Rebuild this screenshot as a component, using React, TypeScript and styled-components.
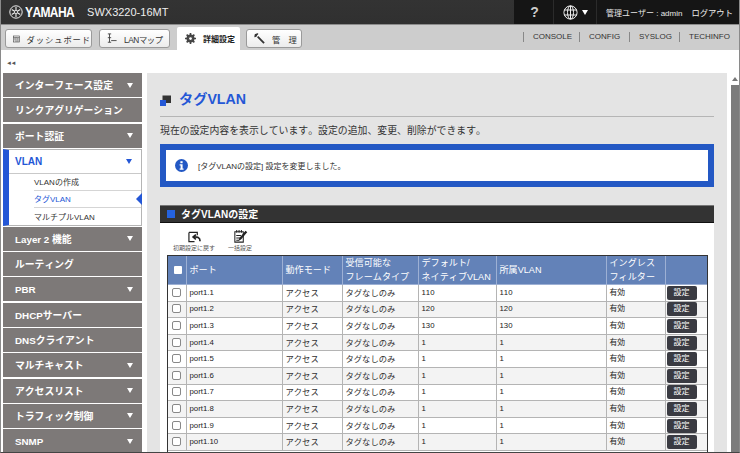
import React from "react";
import styled, { createGlobalStyle } from "styled-components";

const FONT = `"Liberation Sans", "Noto Sans CJK JP", Arial, sans-serif`;

const Global = createGlobalStyle`
  html, body { margin: 0; padding: 0; height: 100%; overflow: hidden; background: #fff; }
  #root { height: 453px; }
  * { box-sizing: border-box; font-kerning: none; }
`;

const Page = styled.div`
  width: 740px;
  height: 453px;
  overflow: hidden;
  font-family: ${FONT};
  background: #fff;
  display: flex;
  flex-direction: column;
  border-left: 1px solid #8a8a8a;
  border-right: 1px solid #8a8a8a;
  border-bottom: 1px solid #444;
`;

const TopBar = styled.header`
  height: 25px;
  flex: none;
  display: flex;
  align-items: stretch;
  background: linear-gradient(#333, #303030);
  border-bottom: 1px solid #8c8c8c;
  color: #fff;
`;

const Brand = styled.div`
  flex: 1;
  display: flex;
  align-items: center;
  padding-left: 8px;
`;

const BrandName = styled.span`
  font-size: 12px;
  font-weight: 700;
  letter-spacing: -0.6px;
  margin-left: 2px;
  transform: scaleY(1.28);
`;

const Model = styled.span`
  font-size: 11px;
  margin-left: 13px;
  color: #eee;
`;

const TopTools = styled.div`
  width: 225px;
  display: flex;
  align-items: center;
  background: #151515;
`;

const TopCell = styled.div<{ $w: number }>`
  width: ${(p) => p.$w}px;
  height: 100%;
  display: flex;
  align-items: center;
  justify-content: center;
  gap: 4px;
  border-right: 1px solid #2b2b2b;
`;

const Help = styled.span`
  font-size: 14px;
  font-weight: 700;
  color: #ccc;
  margin-left: 2px;
`;

const UserText = styled.span`
  font-size: 8px;
  color: #e6e6e6;
  margin-left: 9px;
  white-space: nowrap;
`;

const Logout = styled.span`
  font-size: 8.3px;
  color: #eee;
  margin-left: 9px;
  white-space: nowrap;
`;

const Arrow = styled.span<{ $color?: string }>`
  width: 0;
  height: 0;
  border-left: 3.5px solid transparent;
  border-right: 3.5px solid transparent;
  border-top: 5px solid ${(p) => p.$color || "#fff"};
  display: block;
`;

const TabBar = styled.nav`
  height: 25px;
  flex: none;
  display: flex;
  align-items: flex-end;
  background: #cdcdcd;
  padding-left: 4px;
`;

const Tabs = styled.div`
  flex: 1;
  display: flex;
  align-items: flex-end;
  height: 100%;
`;

const TabButton = styled.div<{ $w: number; $gap: number }>`
  width: ${(p) => p.$w}px;
  margin-right: ${(p) => p.$gap}px;
  height: 19px;
  margin-bottom: 2px;
  display: flex;
  align-items: center;
  gap: 7px;
  padding-left: 7px;
  background: linear-gradient(#fff, #ececec);
  border: 1px solid #9a9a9a;
  border-radius: 3px;
  font-size: 8.3px;
  color: #333;
  white-space: nowrap;
`;

const TabLabel = styled.span<{ $spread: number }>`
  letter-spacing: ${(p) => p.$spread}px;
`;

const ActiveTab = styled.div`
  width: 63px;
  margin-right: 6px;
  height: 23px;
  display: flex;
  align-items: center;
  gap: 7px;
  padding-left: 8px;
  background: #fff;
  border-radius: 2px 2px 0 0;
  font-size: 8px;
  font-weight: 700;
  color: #222;
  white-space: nowrap;
`;

const LinkBar = styled.div`
  display: flex;
  align-items: center;
  height: 100%;
  padding-bottom: 2px;
`;

const BarLink = styled.span<{ $w: number }>`
  width: ${(p) => p.$w}px;
  height: 10px;
  line-height: 10px;
  border-left: 1px solid #888;
  padding-left: 9px;
  font-size: 8px;
  color: #333;
`;

const Body = styled.div`
  flex: 1;
  min-height: 0;
  display: flex;
`;

const SideCol = styled.aside`
  width: 146px;
  flex: none;
  padding: 3px 0 0 2px;
  overflow: hidden;
`;

const Collapse = styled.div`
  height: 20px;
  padding-left: 3px;
  display: flex;
  align-items: center;
  font-size: 6px;
  letter-spacing: -1.5px;
  color: #555;
`;

const SideItem = styled.div`
  width: 139px;
  height: 24px;
  margin-bottom: 1.3px;
  background: #7d7978;
  color: #fff;
  font-size: 9.8px;
  font-weight: 700;
  display: flex;
  align-items: center;
  justify-content: space-between;
  padding: 0 9px 0 12px;
  white-space: nowrap;
`;

const OpenGroup = styled.div`
  width: 139px;
  margin-bottom: 1px;
  border-left: 6px solid #2457d6;
  border-right: 1px solid #b5b5b5;
  border-bottom: 1px solid #b5b5b5;
  border-top: 1px solid #b5b5b5;
  background: #fff;
`;

const OpenHead = styled.div`
  height: 24px;
  display: flex;
  align-items: center;
  justify-content: space-between;
  padding: 0 9px 0 6px;
  font-size: 10px;
  font-weight: 700;
  color: #2457d6;
  border-bottom: 1px solid #c9c9c9;
`;

const SubItem = styled.div<{ $active?: boolean; $last?: boolean }>`
  height: 17px;
  margin-left: 25px;
  position: relative;
  display: flex;
  align-items: center;
  font-size: 8px;
  color: ${(p) => (p.$active ? "#2457d6" : "#333")};
  border-bottom: ${(p) => (p.$last ? "none" : "1px solid #d5d5d5")};
  white-space: nowrap;
`;

const SubPointer = styled.span`
  position: absolute;
  right: -1px;
  top: 2px;
  width: 0;
  height: 0;
  border-top: 6px solid transparent;
  border-bottom: 6px solid transparent;
  border-right: 6px solid #2457d6;
`;

const Main = styled.main`
  flex: 1;
  min-width: 0;
  background: #e4e4e4;
  margin-top: 23px;
  padding: 0 13px;
  overflow: hidden;
`;

const ScrollTrack = styled.div`
  width: 8px;
  flex: none;
  margin: 23px 0 0 4px;
  display: flex;
  flex-direction: column;
`;

const ScrollUp = styled.div`
  height: 12px;
  display: flex;
  align-items: center;
  justify-content: center;
  background: #fff;
`;

const ScrollArrow = styled.span`
  width: 0;
  height: 0;
  border-left: 3px solid transparent;
  border-right: 3px solid transparent;
  border-bottom: 4px solid #777;
`;

const ScrollThumb = styled.div`
  flex: 1;
  background: #7c7c7c;
`;

const TitleRow = styled.div`
  height: 44px;
  display: flex;
  align-items: flex-end;
  gap: 8px;
  padding-bottom: 7px;
  border-bottom: 1px solid #b5b5b5;
`;

const PageTitle = styled.h1`
  margin: 0;
  font-size: 14.2px;
  line-height: 20px;
  font-weight: 700;
  color: #2457d6;
`;

const Lead = styled.p`
  margin: 0;
  height: 27px;
  line-height: 27px;
  font-size: 9.9px;
  color: #333;
  white-space: nowrap;
`;

const Notice = styled.div`
  height: 43px;
  display: flex;
  align-items: center;
  gap: 10px;
  padding: 0 0 1px 9px;
  background: #fff;
  border: 6px solid #2358c4;
  font-size: 8px;
  color: #333;
`;

const Panel = styled.section`
  margin-top: 18px;
  background: #fff;
`;

const PanelHead = styled.h2`
  margin: 0;
  height: 18px;
  display: flex;
  align-items: center;
  gap: 6px;
  padding: 0 0 1px 7px;
  background: #333;
  border-top: 1px solid #777;
  border-bottom: 1px solid #111;
  font-size: 10px;
  font-weight: 700;
  color: #fff;
`;

const HeadSquare = styled.span`
  width: 8px;
  height: 8px;
  background: #2563e0;
`;

const ActionRow = styled.div`
  height: 32px;
  display: flex;
  padding: 5px 0 0 13px;
  gap: 13px;
`;

const ActionItem = styled.div`
  display: flex;
  flex-direction: column;
  align-items: center;
  justify-content: flex-end;
  height: 25px;
  font-size: 6px;
  line-height: 9px;
  color: #555;
  white-space: nowrap;
`;

const TableFrame = styled.div`
  width: 541px;
  height: 198px;
  margin-left: 7px;
  border: 1px solid #333;
  border-bottom: none;
`;

const Table = styled.table`
  width: 539px;
  border-collapse: collapse;
  table-layout: fixed;
`;

const Th = styled.th`
  height: 28px;
  padding: 0 0 0 3px;
  background: #6382b8;
  border: 1px solid #9db0d4;
  border-top: none;
  color: #fff;
  font-size: 9.1px;
  line-height: 14px;
  font-weight: 400;
  text-align: left;
  white-space: nowrap;
  &:first-child { border-left: none; }
  &:last-child { border-right: none; }
`;

const Tr = styled.tr<{ $even: boolean }>`
  background: ${(p) => (p.$even ? "#f3f3f3" : "#fff")};
`;

const Td = styled.td<{ $small?: boolean }>`
  height: 16.6px;
  padding: 0 0 0 3px;
  border: 1px solid #b4b4b4;
  color: ${(p) => (p.$small ? "#222" : "#333")};
  font-size: ${(p) => (p.$small ? 7.8 : 8.3)}px;
  line-height: 14px;
  white-space: nowrap;
  overflow: hidden;
  &:first-child { border-left: none; }
  &:last-child { border-right: none; }
`;

const CheckTd = styled(Td)`
  padding: 0;
  text-align: center;
`;

const CheckBox = styled.span`
  display: block;
  width: 9px;
  height: 9px;
  margin: 0 auto 1px;
  border: 1px solid #888;
  border-radius: 2px;
  background: #fff;
`;

const HeadCheck = styled.span`
  display: block;
  width: 8px;
  height: 8px;
  margin: 0 auto;
  background: #fff;
  border-radius: 1px;
`;

const SetButton = styled.span`
  display: block;
  width: 30px;
  height: 14px;
  margin: 0 0 0 1px;
  line-height: 14px;
  background: #3a3b42;
  border-radius: 2px;
  color: #fff;
  font-size: 8px;
  text-align: center;
`;

const Logo = () => (
  <svg width="14" height="14" viewBox="0 0 14 14" fill="none" stroke="#eee">
    <circle cx="7" cy="7" r="6.2" strokeWidth="1" />
    <g strokeWidth="1.1">
      <path d="M7 2v10M2.7 4.5l8.6 5M2.7 9.5l8.6-5" />
    </g>
    <circle cx="7" cy="7" r="1.6" fill="#333" strokeWidth="0.8" />
  </svg>
);

const Globe = () => (
  <svg width="15" height="15" viewBox="0 0 15 15" fill="none" stroke="#eee" strokeWidth="1">
    <circle cx="7.5" cy="7.5" r="6.6" />
    <ellipse cx="7.5" cy="7.5" rx="3" ry="6.6" />
    <path d="M7.5 1v13M1 5h13M1 10h13" />
  </svg>
);

const DashIcon = () => (
  <svg width="10" height="10" viewBox="0 0 11 11" fill="none" stroke="#444">
    <rect x="0.5" y="0.5" width="10" height="10" />
    <path d="M0.5 3h10M5 3v7.5M2 5h2M2 7h2M6.5 5h3M6.5 7h3M6.5 9h3" />
  </svg>
);

const LanIcon = () => (
  <svg width="10" height="11" viewBox="0 0 12 12" fill="none" stroke="#444">
    <path d="M1 0.5h4M3 0.5v10M1 5h4M1 10.5h4M5 8.5h6.5" strokeWidth="1.1" />
  </svg>
);

const Gear = () => (
  <svg width="11" height="11" viewBox="0 0 12 12">
    <circle cx="6" cy="6" r="3.4" fill="none" stroke="#444" strokeWidth="2" />
    <path d="M6 0v12M0 6h12M1.8 1.8l8.4 8.4M10.2 1.8l-8.4 8.4" stroke="#444" strokeWidth="1.8" />
    <circle cx="6" cy="6" r="1.5" fill="#fff" />
  </svg>
);

const Wrench = () => (
  <svg width="11" height="11" viewBox="0 0 12 12" fill="none" stroke="#333">
    <path d="M11 11L4 4" strokeWidth="2" />
    <path d="M1 1.5l2 2M4.5 1.2A3 3 0 0 0 1.2 4.5" strokeWidth="1.6" />
  </svg>
);

const TitleIcon = () => (
  <svg width="11" height="11" viewBox="0 0 11 11" style={{ marginBottom: 3 }}>
    <rect x="2.5" y="0.5" width="8.5" height="7.5" fill="#333" />
    <rect x="0" y="5" width="6" height="6" fill="#2457d6" />
  </svg>
);

const InfoIcon = () => (
  <svg width="13" height="13" viewBox="0 0 13 13">
    <circle cx="6.5" cy="6.5" r="6.5" fill="#2358c4" />
    <rect x="5.4" y="2.2" width="2.2" height="2" fill="#fff" />
    <path d="M4.6 5.3h3v4.2h1v1.3H4.6V9.5h1V6.6h-1z" fill="#fff" />
  </svg>
);

const ResetIcon = () => (
  <svg width="15" height="13" viewBox="0 0 16 14" fill="none" stroke="#222" strokeWidth="1.3">
    <path d="M2 1.5h9v3M2 1.5v10h6" />
    <path d="M14 11c0-4-3-5-7-4.5M9.5 3.8L6.5 6.5l3 2.6" strokeWidth="1.8" />
  </svg>
);

const BatchIcon = () => (
  <svg width="16" height="15" viewBox="0 0 16 16" fill="none" stroke="#222" strokeWidth="1.1">
    <path d="M2.5 3h9v11h-9zM4.5 1v3M7 1v3M9.5 1v3M4 7h5M4 9.5h4M4 12h3" />
    <path d="M15 3.5L9 10.5l-1.6 1 .6-1.8 6-7z" fill="#222" />
  </svg>
);

const NAV_TOP = [
  { label: "インターフェース設定", arrow: true },
  { label: "リンクアグリゲーション", arrow: false },
  { label: "ポート認証", arrow: true },
];
const NAV_BOTTOM = [
  { label: "Layer 2 機能", arrow: true },
  { label: "ルーティング", arrow: false },
  { label: "PBR", arrow: true },
  { label: "DHCPサーバー", arrow: false },
  { label: "DNSクライアント", arrow: false },
  { label: "マルチキャスト", arrow: true },
  { label: "アクセスリスト", arrow: true },
  { label: "トラフィック制御", arrow: true },
  { label: "SNMP", arrow: true },
];

const ROWS = Array.from({ length: 10 }, (_, i) => ({
  port: `port1.${i + 1}`,
  vlan: i < 3 ? String(110 + i * 10) : "1",
}));

const COLS = [18, 96, 60, 76, 78, 110, 59, 42];

export default function App() {
  return (
    <Page>
      <Global />
      <TopBar>
        <Brand>
          <Logo />
          <BrandName>YAMAHA</BrandName>
          <Model>SWX3220-16MT</Model>
        </Brand>
        <TopTools>
          <TopCell $w={40}>
            <Help>?</Help>
          </TopCell>
          <TopCell $w={43}>
            <Globe />
            <Arrow />
          </TopCell>
          <UserText>管理ユーザー : admin</UserText>
          <Logout>ログアウト</Logout>
        </TopTools>
      </TopBar>
      <TabBar>
        <Tabs>
          <TabButton $w={87} $gap={7}>
            <DashIcon />
            <TabLabel $spread={0.9}>ダッシュボード</TabLabel>
          </TabButton>
          <TabButton $w={71} $gap={7}>
            <LanIcon />
            <TabLabel $spread={-0.4}>LANマップ</TabLabel>
          </TabButton>
          <ActiveTab>
            <Gear />
            詳細設定
          </ActiveTab>
          <TabButton $w={56} $gap={0}>
            <Wrench />
            管　理
          </TabButton>
        </Tabs>
        <LinkBar>
          <BarLink $w={56}>CONSOLE</BarLink>
          <BarLink $w={50}>CONFIG</BarLink>
          <BarLink $w={50}>SYSLOG</BarLink>
          <BarLink $w={60}>TECHINFO</BarLink>
        </LinkBar>
      </TabBar>
      <Body>
        <SideCol>
          <Collapse>◄◄</Collapse>
          {NAV_TOP.map((n) => (
            <SideItem key={n.label}>
              {n.label}
              {n.arrow && <Arrow />}
            </SideItem>
          ))}
          <OpenGroup>
            <OpenHead>
              VLAN
              <Arrow $color="#2457d6" />
            </OpenHead>
            <SubItem>VLANの作成</SubItem>
            <SubItem $active>
              タグVLAN
              <SubPointer />
            </SubItem>
            <SubItem $last>マルチプルVLAN</SubItem>
          </OpenGroup>
          {NAV_BOTTOM.map((n) => (
            <SideItem key={n.label}>
              {n.label}
              {n.arrow && <Arrow />}
            </SideItem>
          ))}
        </SideCol>
        <Main>
          <TitleRow>
            <TitleIcon />
            <PageTitle>タグVLAN</PageTitle>
          </TitleRow>
          <Lead>現在の設定内容を表示しています。設定の追加、変更、削除ができます。</Lead>
          <Notice>
            <InfoIcon />
            [タグVLANの設定] 設定を変更しました。
          </Notice>
          <Panel>
            <PanelHead>
              <HeadSquare />
              タグVLANの設定
            </PanelHead>
            <ActionRow>
              <ActionItem>
                <ResetIcon />
                初期設定に戻す
              </ActionItem>
              <ActionItem>
                <BatchIcon />
                一括設定
              </ActionItem>
            </ActionRow>
            <TableFrame>
              <Table>
                <colgroup>
                  {COLS.map((w, i) => (
                    <col key={i} style={{ width: w }} />
                  ))}
                </colgroup>
                <thead>
                  <tr>
                    <Th>
                      <HeadCheck />
                    </Th>
                    <Th>ポート</Th>
                    <Th>動作モード</Th>
                    <Th>
                      受信可能な
                      <br />
                      フレームタイプ
                    </Th>
                    <Th>
                      デフォルト/
                      <br />
                      ネイティブVLAN
                    </Th>
                    <Th>所属VLAN</Th>
                    <Th>
                      イングレス
                      <br />
                      フィルター
                    </Th>
                    <Th />
                  </tr>
                </thead>
                <tbody>
                  {ROWS.map((r, i) => (
                    <Tr key={r.port} $even={i % 2 === 1}>
                      <CheckTd>
                        <CheckBox />
                      </CheckTd>
                      <Td $small>{r.port}</Td>
                      <Td>アクセス</Td>
                      <Td>タグなしのみ</Td>
                      <Td $small>{r.vlan}</Td>
                      <Td $small>{r.vlan}</Td>
                      <Td $small>有効</Td>
                      <CheckTd>
                        <SetButton>設定</SetButton>
                      </CheckTd>
                    </Tr>
                  ))}
                </tbody>
              </Table>
            </TableFrame>
          </Panel>
        </Main>
        <ScrollTrack>
          <ScrollUp>
            <ScrollArrow />
          </ScrollUp>
          <ScrollThumb />
        </ScrollTrack>
      </Body>
    </Page>
  );
}
